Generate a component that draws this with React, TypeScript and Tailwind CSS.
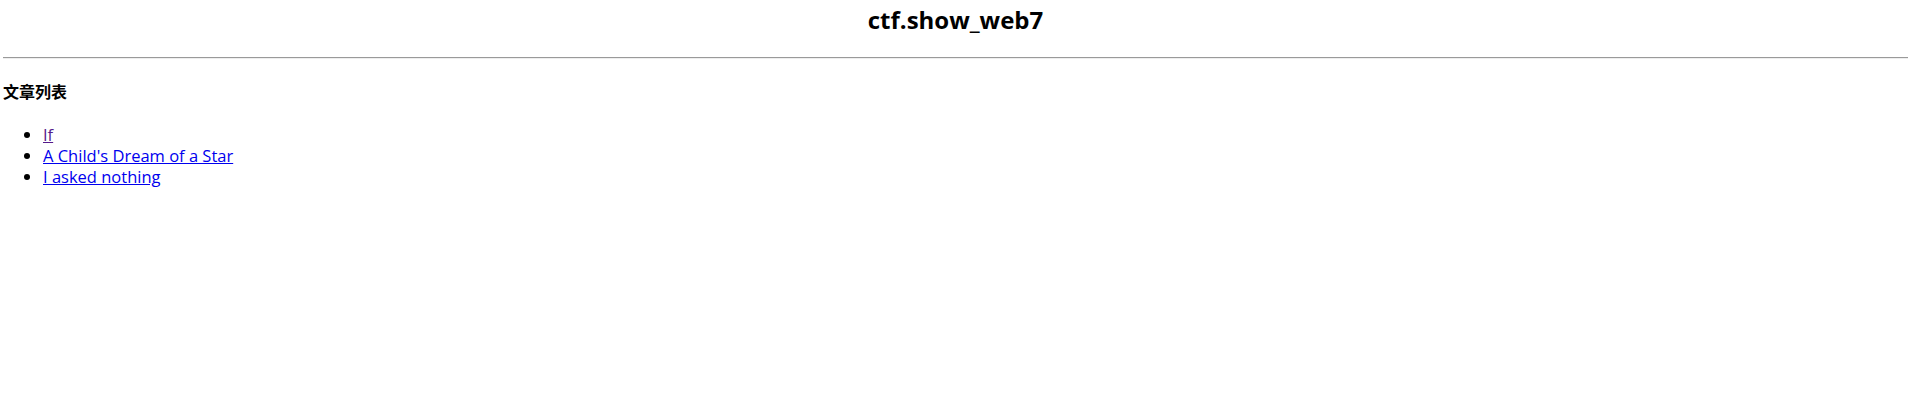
export default function App() {
  const posts = [
    { title: "If", visited: true },
    { title: "A Child's Dream of a Star", visited: false },
    { title: "I asked nothing", visited: false },
  ]

  return (
    <div className="min-h-[414px] bg-white px-[3px] pt-[4px] text-black font-['Segoe_UI','Open_Sans','Noto_Sans_CJK_SC',sans-serif]">
      <h2 className="text-center text-[24px] font-bold leading-[32px]">ctf.show_web7</h2>
      <hr className="mt-[21px] border-t border-b border-t-[#9a9a9a] border-b-[#eeeeee]" />
      <h4 className="mt-[23px] text-[16px] font-bold leading-[21px]">文章列表</h4>
      <ul className="mt-[21px] list-disc pl-[40px] text-[16.5px] leading-[21px]">
        {posts.map((p) => (
          <li key={p.title}>
            <a href="#" className={p.visited ? "text-[#551a8b] underline" : "text-[#0000ee] underline"}>
              {p.title}
            </a>
          </li>
        ))}
      </ul>
    </div>
  )
}
